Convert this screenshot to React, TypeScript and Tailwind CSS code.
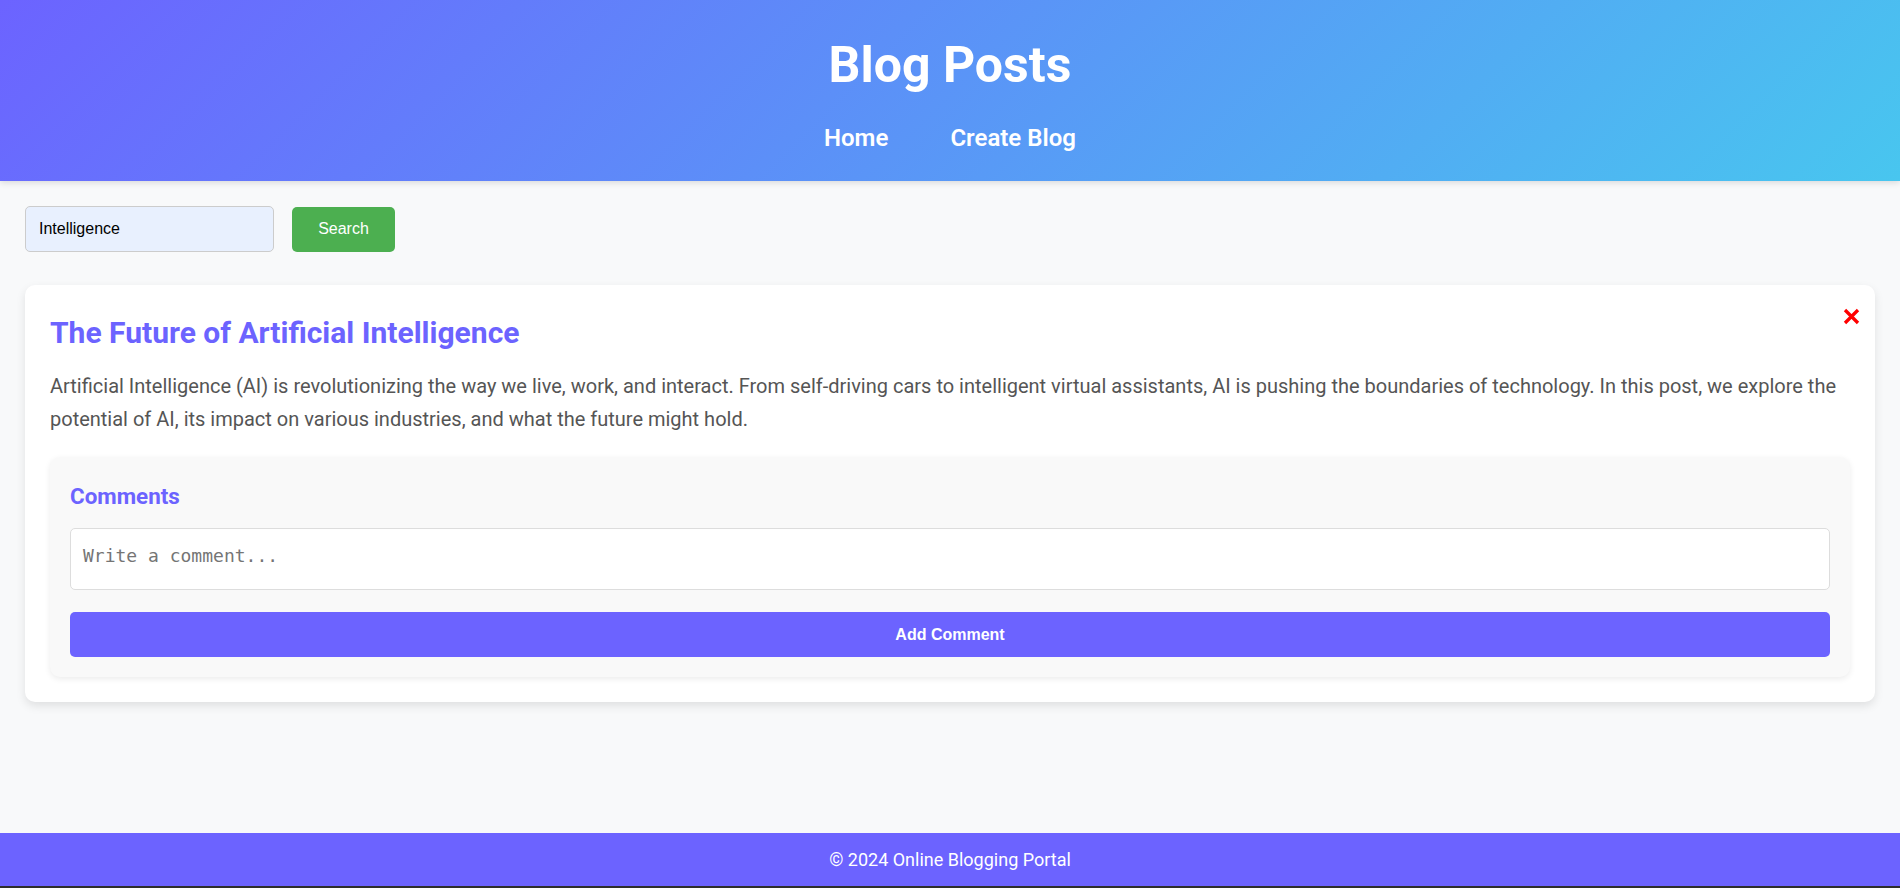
import React, { useState } from 'react';

const posts = [
  {
    id: 1,
    title: 'The Future of Artificial Intelligence',
    body: 'Artificial Intelligence (AI) is revolutionizing the way we live, work, and interact. From self-driving cars to intelligent virtual assistants, AI is pushing the boundaries of technology. In this post, we explore the potential of AI, its impact on various industries, and what the future might hold.',
  },
];

const CloseIcon = () => (
  <svg width="17" height="17" viewBox="0 0 17 17" aria-hidden="true">
    <path d="M2 2 L15 15 M15 2 L2 15" stroke="#ff0000" strokeWidth="3.3" strokeLinecap="butt" fill="none" />
  </svg>
);

const App: React.FC = () => {
  const [query, setQuery] = useState('Intelligence');
  const [comment, setComment] = useState('');

  return (
    <div className="min-h-screen flex flex-col bg-[#f8f9fa] font-['Roboto',sans-serif]">
      {/* Header */}
      <header className="bg-[linear-gradient(135deg,#6c63ff,#48c6ef)] text-white text-center pt-[36px] pb-[30px] shadow-[0_2px_6px_rgba(0,0,0,0.12)]">
        <h1 className="text-[50px] leading-[58px] font-bold mb-[31px]">Blog Posts</h1>
        <nav className="flex justify-center gap-[62px] text-[24px] leading-[26px] font-semibold">
          <a href="#" className="hover:underline">Home</a>
          <a href="#" className="hover:underline">Create Blog</a>
        </nav>
      </header>

      <main className="flex-1 px-[25px] pt-[25px]">
        {/* Search */}
        <div className="flex items-center gap-[18px] font-['Liberation_Sans',Arial,sans-serif]">
          <input
            value={query}
            onChange={e => setQuery(e.target.value)}
            className="w-[249px] h-[46px] px-[13px] bg-[#e8f0fe] border border-[#ccc] rounded-[5px] text-[16px] text-black outline-none"
          />
          <button className="w-[103px] h-[45px] bg-[#4caf50] text-white text-[16px] rounded-[5px] hover:bg-[#43a047]">
            Search
          </button>
        </div>

        {/* Posts */}
        <div className="mt-[33px]">
          {posts.map(post => (
            <div key={post.id} className="relative bg-white rounded-[10px] p-[25px] shadow-[0_4px_10px_rgba(0,0,0,0.1)]">
              <button className="absolute top-[23px] right-[15px]" aria-label="Delete post">
                <CloseIcon />
              </button>
              <h2 className="mt-[5px] text-[30px] leading-[36px] font-bold text-[#6c63ff]">{post.title}</h2>
              <p className="mt-[19px] text-[20px] leading-[33px] text-[#555]">{post.body}</p>

              <div className="mt-[21px] bg-[#f9f9f9] rounded-[10px] p-[20px] shadow-[0_2px_6px_rgba(0,0,0,0.08)]">
                <h3 className="mt-[6px] text-[22.4px] leading-[26px] font-bold text-[#6c63ff]">Comments</h3>
                <textarea
                  value={comment}
                  onChange={e => setComment(e.target.value)}
                  placeholder="Write a comment..."
                  className="mt-[19px] block w-full h-[62px] px-[12px] pt-[13px] bg-white border border-[#ddd] rounded-[5px] resize-none font-['DejaVu_Sans_Mono',monospace] text-[18px] placeholder:text-[#757575] outline-none"
                />
                <button className="mt-[22px] w-full h-[45px] bg-[#6c63ff] text-white font-bold text-[16px] rounded-[5px] font-['Liberation_Sans',Arial,sans-serif]">
                  Add Comment
                </button>
              </div>
            </div>
          ))}
        </div>
      </main>

      {/* Footer */}
      <footer className="h-[55px] flex items-center justify-center bg-[#6c63ff] text-white text-[18px] border-b-2 border-[#2e2e2e]">
        © 2024 Online Blogging Portal
      </footer>
    </div>
  );
};

export default App;
